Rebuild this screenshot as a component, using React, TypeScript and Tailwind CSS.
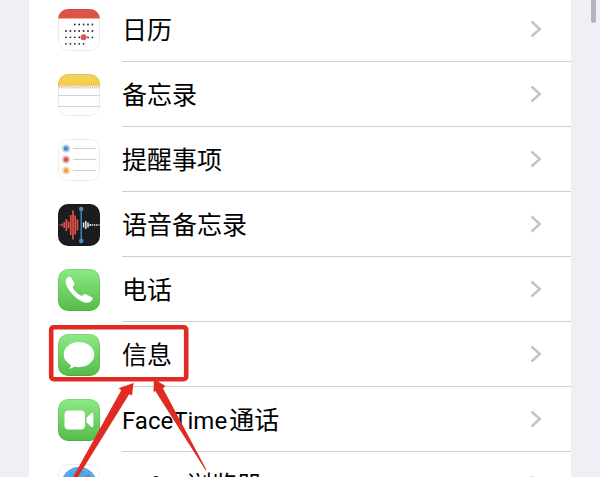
import type { ReactNode } from "react";

interface SettingsItem {
  id: string;
  latin?: string;
  label: string;
  icon: ReactNode;
}

function CalendarIcon() {
  const rows = [
    { y: 15.5, from: 2, to: 6 },
    { y: 22, from: 0, to: 6 },
    { y: 28.3, from: 0, to: 6 },
    { y: 34.8, from: 0, to: 4 },
  ];

  return (
    <svg viewBox="0 0 42 42" className="size-full">
      <rect width="42" height="42" fill="#fff" />
      <rect width="42" height="9.5" fill="#df5347" />
      {rows.map((row) =>
        Array.from({ length: row.to - row.from + 1 }, (_, index) => (
          <circle
            key={`${row.y}-${index}`}
            cx={8 + (row.from + index) * 4.4}
            cy={row.y}
            r="0.9"
            fill="#222"
          />
        ))
      )}
      <circle cx="25.6" cy="28.3" r="3" fill="#e0564f" />
    </svg>
  );
}

function NotesIcon() {
  return (
    <svg viewBox="0 0 42 42" className="size-full">
      <defs>
        <linearGradient id="notes" x1="0" y1="0" x2="0" y2="1">
          <stop offset="0" stopColor="#f0d467" />
          <stop offset="1" stopColor="#f6cc3c" />
        </linearGradient>
      </defs>
      <rect width="42" height="42" fill="#fff" />
      <rect width="42" height="11.5" fill="url(#notes)" />
      <path d="M0 12h42" stroke="#c9b76a" strokeWidth="0.8" />
      <path d="M1 13.8h41" stroke="#999" strokeWidth="1" strokeDasharray="1 1.2" />
      <path d="M0 21.5h42M0 32.5h42" stroke="#cfcfcf" strokeWidth="0.9" />
    </svg>
  );
}

function RemindersIcon() {
  const dots = [
    { y: 9.5, color: "#4b8fd4" },
    { y: 20.5, color: "#d9564f" },
    { y: 31.5, color: "#e9a94a" },
  ];

  return (
    <svg viewBox="0 0 42 42" className="size-full">
      <rect width="42" height="42" fill="#fff" />
      {dots.map((dot) => (
        <g key={dot.y}>
          <circle cx="8" cy={dot.y} r="3.6" fill="#fff" stroke={dot.color} strokeOpacity="0.6" strokeWidth="0.9" />
          <circle cx="8" cy={dot.y} r="2.5" fill={dot.color} />
          <path d={`M15 ${dot.y}h23`} stroke="#c8c8c8" strokeWidth="0.9" />
        </g>
      ))}
    </svg>
  );
}

function VoiceMemosIcon() {
  return (
    <svg viewBox="0 0 42 42" className="size-full">
      <rect width="42" height="42" fill="#1b1c20" />
      <path
        d="M1.5 20.5v1M4 19.8v2.4M6.2 18v6M8.4 15v12M10.6 17.5v7M12.8 11v20M15 6.5v29M17.2 11.5v19M19.4 15.5v11"
        stroke="#e0504a"
        strokeWidth="1.7"
      />
      <path
        d="M25.6 18.5v5M27.8 17v8M30 18.5v5M32.2 20v2M34.4 20.2v1.6M36.6 20.3v1.4M38.8 20.3v1.4M41 20.4v1.2"
        stroke="#f4f4f4"
        strokeWidth="1.4"
      />
      <path d="M23.2 5v32" stroke="#4383b5" strokeWidth="1.5" />
      <circle cx="23.2" cy="5" r="2.3" fill="#4a8cc0" />
      <circle cx="23.2" cy="37" r="2.3" fill="#4a8cc0" />
    </svg>
  );
}

function GreenTile({ id, children }: { id: string; children: ReactNode }) {
  return (
    <svg viewBox="0 0 42 42" className="size-full">
      <defs>
        <linearGradient id={id} x1="0" y1="0" x2="0" y2="1">
          <stop offset="0" stopColor="#8bea86" />
          <stop offset="1" stopColor="#56bb4a" />
        </linearGradient>
      </defs>
      <rect width="42" height="42" fill={`url(#${id})`} />
      {children}
    </svg>
  );
}

function PhoneIcon() {
  return (
    <GreenTile id="phone">
      <path
        d="M9.4 8.6c1.5-1.3 3.1-1 4 .4l2.6 4.2c.8 1.3.5 2.5-.5 3.5-1 .9-1 1.7-.3 2.8 1.9 2.9 4.1 5 7 6.8 1.1.7 1.9.6 2.8-.4 1-1.1 2.2-1.3 3.5-.5l4.9 2.7c1.5.9 1.6 2.2.4 3.5-2.4 2.4-5.2 3-9.3 1.1C17.5 29.6 11.3 23.3 8.4 16.1c-1.2-3.2-.9-5.7 1-7.5z"
        fill="#fff"
      />
    </GreenTile>
  );
}

function MessagesIcon() {
  return (
    <GreenTile id="messages">
      <path
        d="M21 8c8.6 0 15.3 5.5 15.3 12.6S29.6 33.2 21 33.2c-1.7 0-3.3-.2-4.8-.6-1.3 1.3-3.3 2.1-5.1 2.1 1.1-.9 1.8-2.2 1.8-3.6C8.6 28.8 5.7 25 5.7 20.6 5.7 13.5 12.4 8 21 8z"
        fill="#fff"
      />
    </GreenTile>
  );
}

function FaceTimeIcon() {
  return (
    <GreenTile id="facetime">
      <rect x="6.5" y="11.5" width="20.5" height="19" rx="4" fill="#fff" />
      <path
        d="M28.5 18.8l4.6-4.5c1-.9 2.2-.5 2.2.9v11.6c0 1.4-1.2 1.8-2.2.9l-4.6-4.5z"
        fill="#fff"
      />
    </GreenTile>
  );
}

function SafariIcon() {
  return (
    <svg viewBox="0 0 42 42" className="size-full">
      <rect width="42" height="42" fill="#fff" />
      <circle cx="21" cy="21" r="18" fill="#4ba6e8" />
      <circle cx="21" cy="21" r="16" fill="none" stroke="#8cc8f2" strokeWidth="1.5" strokeDasharray="0.7 1.5" />
      <path d="M33 9L23.5 23.5 18.5 18.5z" fill="#b0685f" />
      <path d="M9 33l9.5-14.5 5 5z" fill="#f4f4f4" />
    </svg>
  );
}

const items: SettingsItem[] = [
  { id: "calendar", label: "日历", icon: <CalendarIcon /> },
  { id: "notes", label: "备忘录", icon: <NotesIcon /> },
  { id: "reminders", label: "提醒事项", icon: <RemindersIcon /> },
  { id: "voice-memos", label: "语音备忘录", icon: <VoiceMemosIcon /> },
  { id: "phone", label: "电话", icon: <PhoneIcon /> },
  { id: "messages", label: "信息", icon: <MessagesIcon /> },
  { id: "facetime", latin: "FaceTime", label: "通话", icon: <FaceTimeIcon /> },
  { id: "safari", latin: "Safari", label: "浏览器", icon: <SafariIcon /> },
];

function Chevron() {
  return (
    <svg viewBox="0 0 12 18" className="h-[18px] w-3" fill="none" stroke="#c3c3c6" strokeWidth="2.4">
      <path d="M1.5 1.5L9.8 9l-8.3 7.5" />
    </svg>
  );
}

// Red frame and arrows pointing at the 信息 row
function Annotation() {
  return (
    <svg
      width="600"
      height="480"
      viewBox="0 0 600 480"
      className="pointer-events-none absolute top-0 left-0"
      fill="#e02b23"
    >
      <rect x="51.2" y="327.2" width="135" height="52" rx="2.5" fill="none" stroke="#e02b23" strokeWidth="4.6" />
      <path d="M133.5 383L132 395.5l-2.8-1.3L76 480h-4.5l49.7-89.7-2.5-2z" />
      <path d="M154 379l11.5 7-2.6 2.3 43.7 81.7-1 .3L155.3 391l-1.8 1z" />
    </svg>
  );
}

export default function App() {
  return (
    <main className="relative h-screen overflow-hidden bg-[#f0eff5] px-[29px] font-[Roboto,'Noto_Sans_CJK_SC',sans-serif] text-black">
      <ul className="-mt-[3px] bg-white">
        {items.map((item) => (
          <li key={item.id}>
            <a href={`#${item.id}`} className="flex h-[65px] pl-[29px]">
              <span className="flex items-center pr-[22px]">
                <span className="relative size-[42px] overflow-hidden rounded-[10px]">
                  {item.icon}
                  <span className="absolute inset-0 rounded-[10px] border border-black/8" />
                </span>
              </span>

              <span className="flex flex-1 items-center justify-between border-b border-[#cfcfd1] pr-[29px]">
                <span className="flex items-baseline gap-[2px] pt-[3px] text-[25px] leading-8">
                  {item.latin && <span className="text-2xl leading-8">{item.latin}</span>}
                  <span>{item.label}</span>
                </span>
                <Chevron />
              </span>
            </a>
          </li>
        ))}
      </ul>

      <Annotation />

      <span className="absolute top-0 right-1 h-[23px] w-[5px] rounded-b-full bg-[#b4b3b9]" />
    </main>
  );
}
